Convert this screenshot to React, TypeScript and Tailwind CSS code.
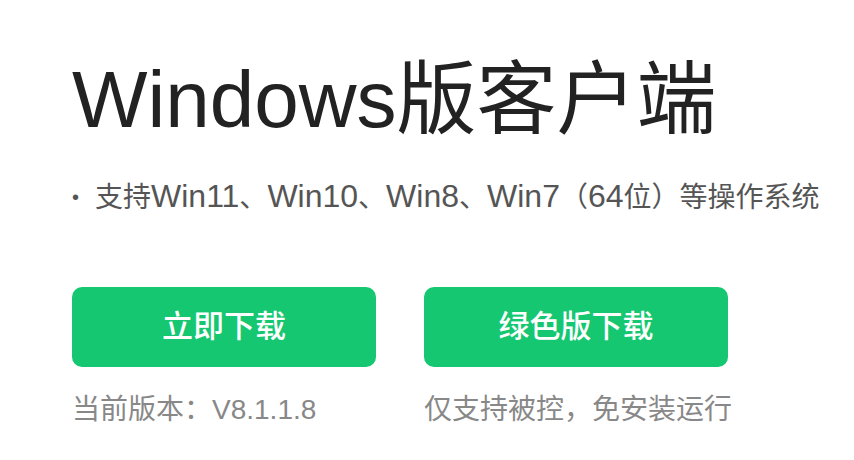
import React from "react";

const font = {
  fontFamily: '"Liberation Sans", "Noto Sans CJK SC", sans-serif',
};

const Latin = ({ children }: { children: React.ReactNode }) => (
  <span className="text-[32px]">{children}</span>
);

const App = () => {
  return (
    <div
      className="w-[854px] h-[460px] bg-white pl-[72px] pt-[60px] overflow-hidden"
      style={font}
    >
      <h1 className="text-[80px] leading-[80px] text-[#222222] font-normal tracking-normal">
        Windows版客户端
      </h1>

      <div className="mt-[40px] flex items-center text-[28px] leading-[32px] text-[#555555] whitespace-nowrap">
        <span className="mr-[16px] text-[20px]">•</span>
        <span>
          支持<Latin>Win11</Latin>、<Latin>Win10</Latin>、<Latin>Win8</Latin>、
          <Latin>Win7</Latin>（<Latin>64</Latin>位）等操作系统
        </span>
      </div>

      <div className="mt-[73px] flex gap-[48px]">
        <div className="w-[304px]">
          <button className="w-[304px] h-[80px] rounded-[10px] bg-[#15c771] text-white text-[31px] font-medium">
            立即下载
          </button>
          <p className="mt-[27px] text-[28px] leading-[32px] text-[#888888] whitespace-nowrap">
            当前版本：V8.1.1.8
          </p>
        </div>
        <div className="w-[304px]">
          <button className="w-[304px] h-[80px] rounded-[10px] bg-[#15c771] text-white text-[31px] font-medium">
            绿色版下载
          </button>
          <p className="mt-[27px] text-[28px] leading-[32px] text-[#888888] whitespace-nowrap">
            仅支持被控，免安装运行
          </p>
        </div>
      </div>
    </div>
  );
};

export default App;
